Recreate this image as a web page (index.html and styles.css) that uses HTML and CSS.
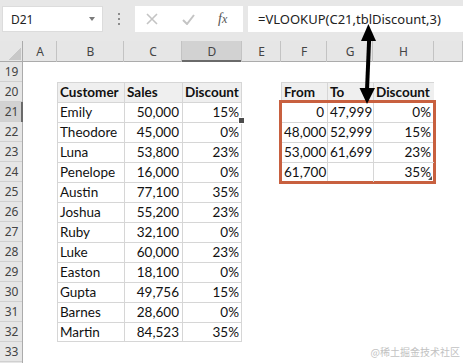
FILE: index.html
```html
<!DOCTYPE html>
<html>
<head>
<meta charset="utf-8">
<link rel="stylesheet" href="styles.css">
</head>
<body>
<div class="app">
  <div class="topbar">
    <div class="namebox"><span>D21</span><span class="caret"></span></div>
    <div class="grip"><span></span><span></span><span></span></div>
    <div class="fxbox">
      <svg class="ico" width="12" height="12" viewBox="0 0 12 12"><path d="M1 1L11 11M11 1L1 11" stroke="#c4c4c4" stroke-width="1.6" fill="none"/></svg>
      <svg class="ico" width="13" height="11" viewBox="0 0 13 11"><path d="M1 6L5 10L12 1" stroke="#c4c4c4" stroke-width="2" fill="none"/></svg>
      <span class="fx">f<span class="fxx">x</span></span>
    </div>
    <div class="formula">=VLOOKUP(C21,tblDiscount,3)</div>
  </div>

  <div class="sheet">
    <div class="corner"></div>
    <div class="ch">A</div>
    <div class="ch">B</div>
    <div class="ch">C</div>
    <div class="ch ch-sel">D</div>
    <div class="ch">E</div>
    <div class="ch">F</div>
    <div class="ch">G</div>
    <div class="ch">H</div>
    <div class="ch"></div>

    <div class="rh">19</div>
    <div class="rh">20</div>
    <div class="rh rh-sel">21</div>
    <div class="rh">22</div>
    <div class="rh">23</div>
    <div class="rh">24</div>
    <div class="rh">25</div>
    <div class="rh">26</div>
    <div class="rh">27</div>
    <div class="rh">28</div>
    <div class="rh">29</div>
    <div class="rh">30</div>
    <div class="rh">31</div>
    <div class="rh">32</div>
    <div class="rh">33</div>
    <div class="rh"></div>

    <div class="t1">
      <div class="c th">Customer</div><div class="c th">Sales</div><div class="c th rc">Discount</div>
      <div class="c">Emily</div><div class="c num">50,000</div><div class="c num rc sel">15%</div>
      <div class="c">Theodore</div><div class="c num">45,000</div><div class="c num rc">0%</div>
      <div class="c">Luna</div><div class="c num">53,800</div><div class="c num rc">23%</div>
      <div class="c">Penelope</div><div class="c num">16,000</div><div class="c num rc">0%</div>
      <div class="c">Austin</div><div class="c num">77,100</div><div class="c num rc">35%</div>
      <div class="c">Joshua</div><div class="c num">55,200</div><div class="c num rc">23%</div>
      <div class="c">Ruby</div><div class="c num">32,100</div><div class="c num rc">0%</div>
      <div class="c">Luke</div><div class="c num">60,000</div><div class="c num rc">23%</div>
      <div class="c">Easton</div><div class="c num">18,100</div><div class="c num rc">0%</div>
      <div class="c">Gupta</div><div class="c num">49,756</div><div class="c num rc">15%</div>
      <div class="c">Barnes</div><div class="c num">28,600</div><div class="c num rc">0%</div>
      <div class="c br">Martin</div><div class="c num br">84,523</div><div class="c num rc br">35%</div>
    </div>

    <div class="t2">
      <div class="t2head">
        <div class="c th">From</div><div class="c th">To</div><div class="c th">Discount</div>
      </div>
      <div class="t2body">
        <div class="c num">0</div><div class="c num">47,999</div><div class="c num">0%</div>
        <div class="c num">48,000</div><div class="c num">52,999</div><div class="c num">15%</div>
        <div class="c num">53,000</div><div class="c num">61,699</div><div class="c num">23%</div>
        <div class="c num">61,700</div><div class="c num"></div><div class="c num grab">35%</div>
      </div>
    </div>
  </div>

  <svg class="arrow" width="463" height="363" viewBox="0 0 463 363">
    <path d="M369.2 38 L367 90" stroke="#000" stroke-width="4" fill="none"/>
    <polygon points="368.4,24 361,41 376,41" fill="#000"/>
    <polygon points="367,104 359.5,88 375,88" fill="#000"/>
  </svg>

  <div class="watermark">@稀土掘金技术社区</div>
</div>
</body>
</html>
```

FILE: styles.css
```css
html, body {
  margin: 0;
  padding: 0;
  background: #fff;
}

.app {
  position: relative;
  width: 463px;
  height: 363px;
  overflow: hidden;
  font-family: "Noto Sans", "Open Sans", sans-serif;
}

/* ---------- formula bar ---------- */
.topbar {
  display: flex;
  height: 41px;
  box-sizing: border-box;
  padding: 6px 0 9px 2px;
  background: #e7e7e7;
}

.namebox {
  width: 101px;
  box-sizing: border-box;
  background: #fff;
  border: 1px solid #dcdcdc;
  display: flex;
  align-items: center;
  justify-content: space-between;
  padding: 0 7px 0 8px;
  font-size: 12px;
  color: #222;
}

.caret {
  width: 0;
  height: 0;
  border-left: 3.5px solid transparent;
  border-right: 3.5px solid transparent;
  border-top: 4px solid #7a7a7a;
}

.grip {
  width: 32px;
  display: flex;
  flex-direction: column;
  align-items: center;
  justify-content: center;
  gap: 3px;
}

.grip span {
  width: 2px;
  height: 2px;
  background: #8c8c8c;
}

.fxbox {
  width: 108px;
  background: #fff;
  display: flex;
  align-items: center;
  padding-left: 11px;
  box-sizing: border-box;
}

.fxbox .ico:first-child {
  margin-right: 24px;
}

.fxbox .ico:nth-child(2) {
  margin-right: 23px;
}

.fx {
  font-family: "Liberation Serif", serif;
  font-style: italic;
  font-size: 14px;
  color: #555;
}

.fxx {
  font-size: 12px;
}

.formula {
  flex: 1;
  margin-left: 5px;
  background: #fff;
  padding-left: 10px;
  font-size: 13px;
  line-height: 26px;
  color: #222;
  white-space: nowrap;
}

/* ---------- sheet ---------- */
.sheet {
  display: grid;
  grid-template-columns: 23px 34px 67px 58px 60px 39px 46px 46px 61px 1fr;
  grid-template-rows: 21px repeat(16, 20px);
  background: #fff;
}

.corner {
  background: linear-gradient(135deg, transparent 50%, #c8c8c8 50%) no-repeat right 2px bottom 2px / 12px 12px, #e6e6e6;
  box-shadow: inset -1px 0 0 #ababab, inset 0 -1px 0 #ababab;
}

.ch {
  background: #e6e6e6;
  font-size: 12px;
  color: #444;
  text-align: center;
  line-height: 21px;
  box-shadow: inset -1px 0 0 #c3c3c3, inset 0 -1px 0 #ababab;
}

.ch-sel {
  background: #d2d2d2;
  box-shadow: inset -1px 0 0 #c3c3c3, inset 0 -2px 0 #6a6a6a;
}

.rh {
  grid-column: 1;
  background: #e6e6e6;
  font-size: 12px;
  color: #444;
  text-align: center;
  line-height: 20px;
  box-shadow: inset -1px 0 0 #ababab, inset 0 -1px 0 #d0d0d0;
}

.rh-sel {
  background: #d2d2d2;
  box-shadow: inset -2px 0 0 #6a6a6a, inset 0 -1px 0 #d0d0d0;
}

/* ---------- tables ---------- */
.t1 {
  grid-column: 3 / 6;
  grid-row: 3 / 16;
  display: grid;
  grid-template-columns: 67px 58px 60px;
  grid-auto-rows: 20px;
}

.t2 {
  grid-column: 7 / 10;
  grid-row: 3 / 8;
  display: flex;
  flex-direction: column;
}

.t2head,
.t2body {
  display: grid;
  grid-template-columns: 46px 46px 61px;
  grid-auto-rows: 20px;
}

.t2body {
  outline: 3px solid #c8603f;
  outline-offset: -1px;
}

.c {
  font-family: "Lato", "Liberation Sans", sans-serif;
  font-size: 13.5px;
  line-height: 20px;
  color: #111;
  padding: 0 3px;
  white-space: nowrap;
  overflow: hidden;
  box-shadow: inset 1px 1px 0 #d6d6d6;
}

.c.rc {
  box-shadow: inset 1px 1px 0 #d6d6d6, inset -1px 0 0 #d6d6d6;
}

.c.br {
  box-shadow: inset 1px 1px 0 #d6d6d6, inset 0 -1px 0 #d6d6d6;
}

.c.rc.br {
  box-shadow: inset 1px 1px 0 #d6d6d6, inset -1px -1px 0 #d6d6d6;
}

.th {
  font-weight: 700;
  background: #efefef;
}

.num {
  text-align: right;
}

.sel {
  position: relative;
  overflow: visible;
  box-shadow: inset 0 0 0 2px #4c4c4c;
}

.sel::after {
  content: "";
  position: absolute;
  right: -3px;
  bottom: -2px;
  width: 5px;
  height: 5px;
  background: #4c4c4c;
  border: 1px solid #fff;
}

.grab {
  position: relative;
}

.grab::after {
  content: "";
  position: absolute;
  right: 2px;
  bottom: 2px;
  width: 0;
  height: 0;
  border-left: 4px solid transparent;
  border-bottom: 4px solid #555;
}

/* ---------- overlays ---------- */
.arrow {
  position: absolute;
  left: 0;
  top: 0;
  pointer-events: none;
}

.watermark {
  position: absolute;
  right: 3px;
  bottom: 4px;
  font-family: "Noto Sans CJK SC", sans-serif;
  font-size: 10px;
  color: #c2c2c2;
}
```
